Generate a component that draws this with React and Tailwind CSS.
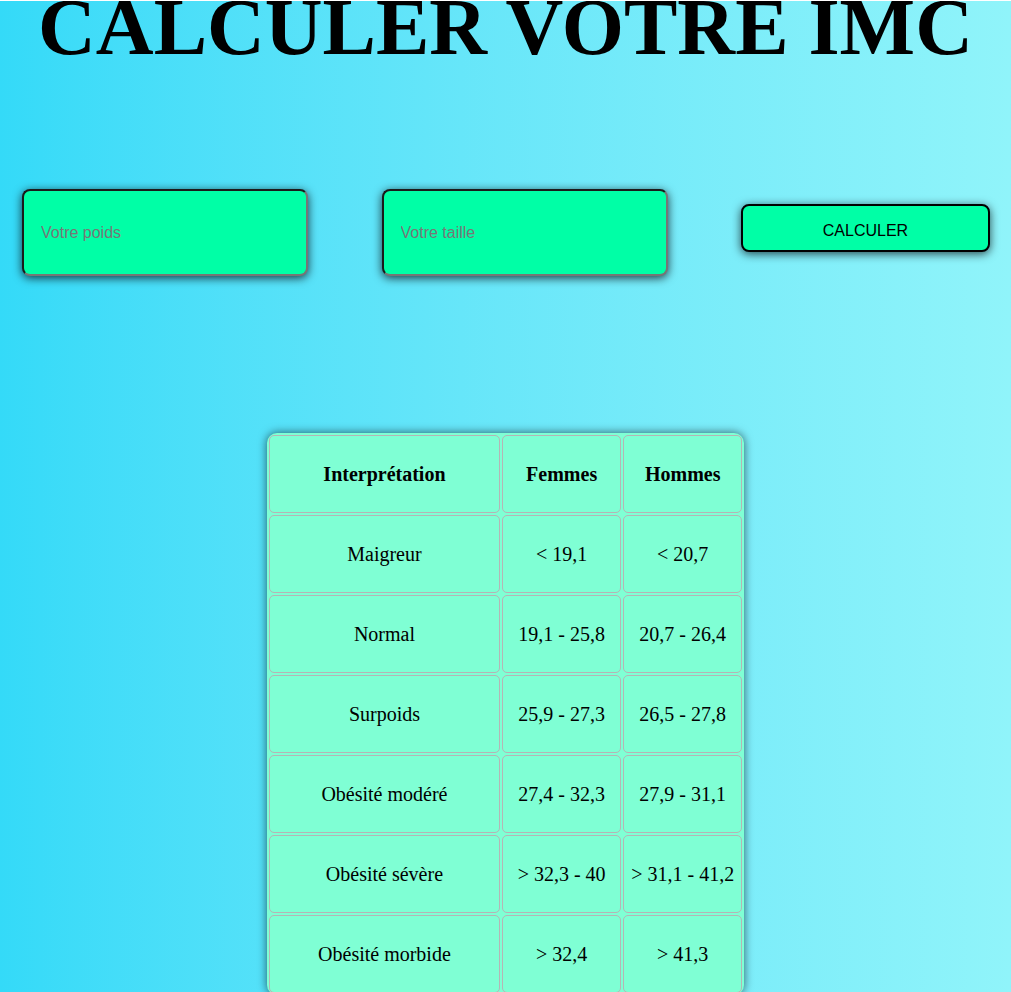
const rows = [
  ['Maigreur', '< 19,1', '< 20,7'],
  ['Normal', '19,1 - 25,8', '20,7 - 26,4'],
  ['Surpoids', '25,9 - 27,3', '26,5 - 27,8'],
  ['Obésité modéré', '27,4 - 32,3', '27,9 - 31,1'],
  ['Obésité sévère', '> 32,3 - 40', '> 31,1 - 41,2'],
  ['Obésité morbide', '> 32,4', '> 41,3'],
]

const cell = 'border border-[#b5b5b5] rounded-[5px] h-[78px] p-0 text-center align-middle'

export default function App() {
  return (
    <div className="min-h-[992px] w-full overflow-hidden bg-gradient-to-r from-[#34daf8] to-[#90f4fa] border-t border-white">
      <h1 className="text-center font-bold text-[80px] leading-[52px] text-black font-['Liberation_Serif','Times_New_Roman',serif]">
        CALCULER VOTRE IMC
      </h1>

      <div className="flex items-start justify-between pl-[22px] pr-[21px] mt-[136px] font-['Liberation_Sans',Arial,sans-serif]">
        <input
          type="text"
          placeholder="Votre poids"
          className="w-[286px] h-[87px] bg-[#00ffa6] rounded-lg border-2 border-t-[#1a1a1a] border-l-[#1a1a1a] border-b-[#767676] border-r-[#767676] pl-[17px] text-base placeholder:text-[#777] outline-none shadow-[0_2px_10px_rgba(0,0,0,0.75)]"
        />
        <input
          type="text"
          placeholder="Votre taille"
          className="w-[286px] h-[87px] bg-[#00ffa6] rounded-lg border-2 border-t-[#1a1a1a] border-l-[#1a1a1a] border-b-[#767676] border-r-[#767676] pl-[17px] text-base placeholder:text-[#777] outline-none shadow-[0_2px_10px_rgba(0,0,0,0.75)]"
        />
        <button className="mt-[15px] w-[249px] h-[48px] pt-[5px] bg-[#00ffa6] border-2 border-black rounded-lg text-base text-black shadow-[0_2px_10px_rgba(0,0,0,0.7)]">
          CALCULER
        </button>
      </div>

      <div className="flex justify-center mt-[157px]">
        <table className="w-[477px] border-separate border-spacing-[2px] bg-[#7fffd4] rounded-[10px] shadow-[0_0_10px_rgba(0,0,0,0.6)] text-[20px] text-black font-['Liberation_Serif','Times_New_Roman',serif]">
          <thead>
            <tr>
              <th className={`${cell} w-[232px]`}>Interprétation</th>
              <th className={`${cell} w-[120px]`}>Femmes</th>
              <th className={`${cell} w-[119px]`}>Hommes</th>
            </tr>
          </thead>
          <tbody>
            {rows.map((r) => (
              <tr key={r[0]}>
                {r.map((v, i) => (
                  <td key={i} className={cell}>{v}</td>
                ))}
              </tr>
            ))}
          </tbody>
        </table>
      </div>
    </div>
  )
}
